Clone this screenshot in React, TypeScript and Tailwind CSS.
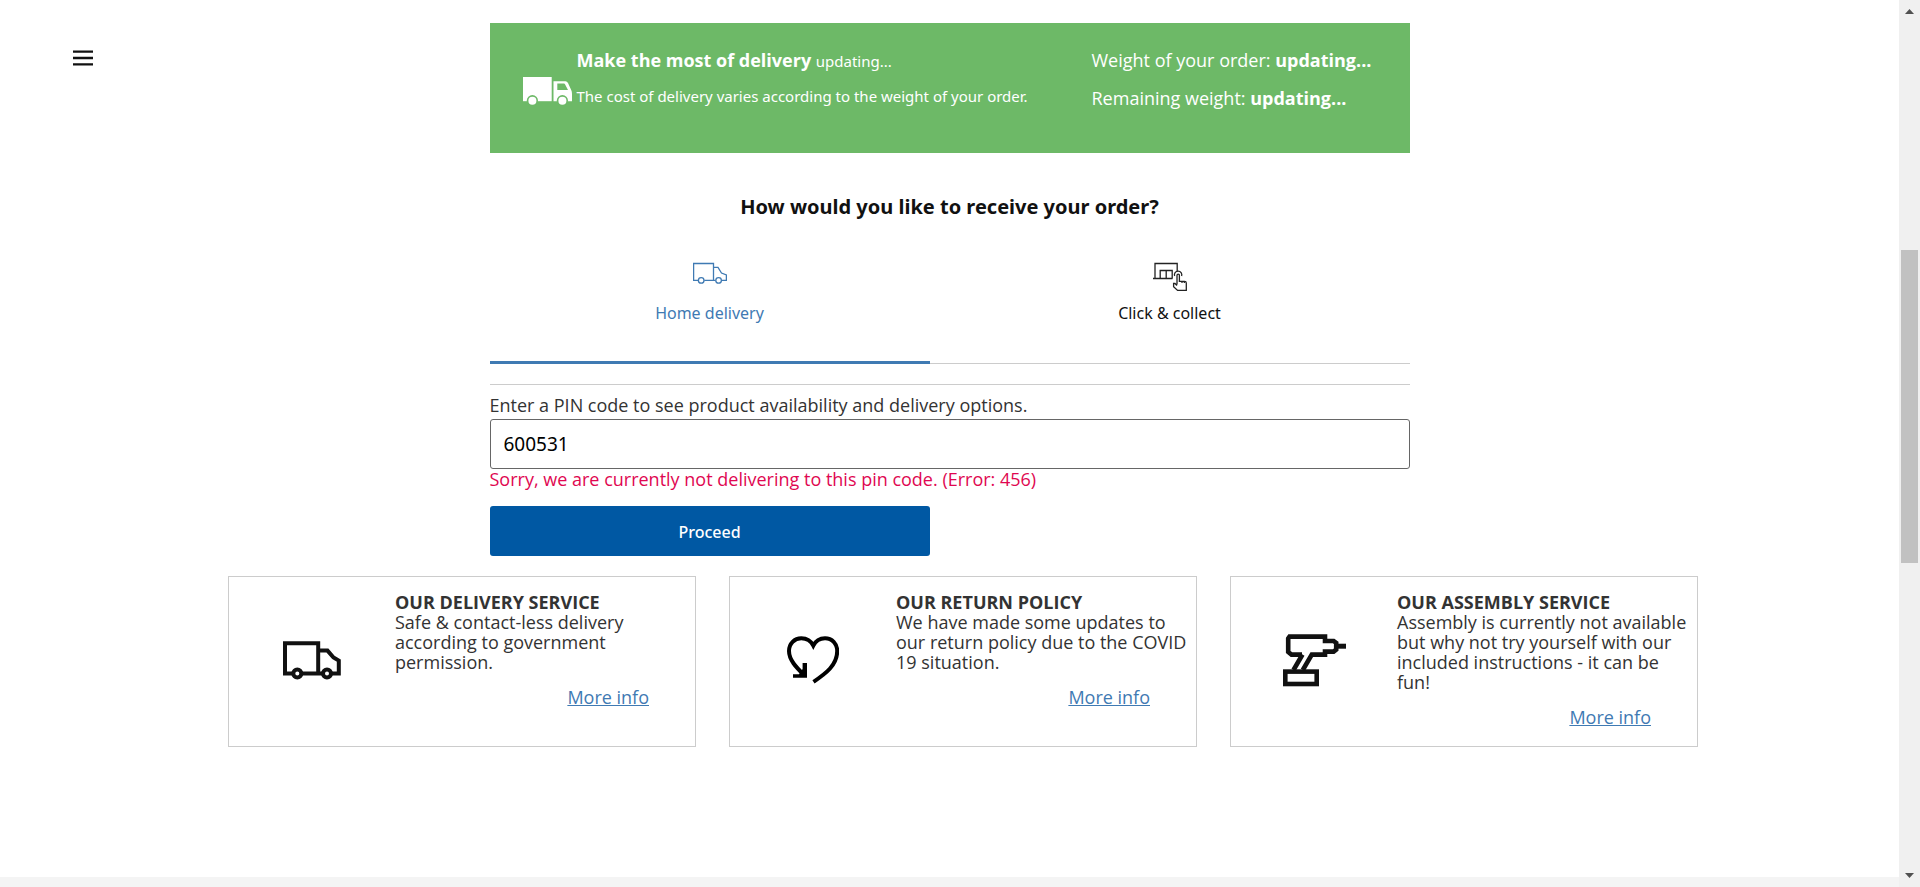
import React, { useState } from "react";

const blue = "#3f7ab3";

function BannerTruck() {
  return (
    <svg width="49" height="29" viewBox="0 0 49 29" aria-hidden="true" className="shrink-0">
      <rect x="0" y="0" width="28.7" height="24.2" fill="#fff" />
      <path
        fill="#fff"
        fillRule="evenodd"
        d="M30.5 4.3H42.5Q44 4.3 45 6L48.2 13Q49 14.5 49 17V24.2H30.5ZM34.3 6.5V13H45L42 7.3Q41.6 6.5 41 6.5Z"
      />
      <circle cx="9.4" cy="23.6" r="5.6" fill="#6db967" />
      <circle cx="39.4" cy="23.6" r="5.6" fill="#6db967" />
      <circle cx="9.4" cy="23.8" r="4" fill="#fff" />
      <circle cx="39.4" cy="23.8" r="4" fill="#fff" />
    </svg>
  );
}

function TabTruck() {
  return (
    <svg width="34" height="30" viewBox="0 0 34 30" fill="none" stroke={blue} strokeWidth="1.3" aria-hidden="true">
      <path d="M5 18.3H.6V1.5H20.5V18.3M11.3 18.3H22.5M20.5 5.3H25L28.5 11L33.4 13V18.3H28.7" />
      <circle cx="8.2" cy="18.4" r="2.8" />
      <circle cx="25.6" cy="18.4" r="2.8" />
    </svg>
  );
}

function StoreHand() {
  return (
    <svg width="34" height="30" viewBox="0 0 34 30" fill="none" stroke="#222" strokeWidth="1.3" aria-hidden="true">
      <path d="M0 16.5H19.5M2 16.5V1.5H24.2V9.5" />
      <path d="M7.2 16.5V8.5H19.2V16.5M13.2 8.5V16.5" />
      <path d="M21.6 14A3.7 3.7 0 1 1 28.6 14" />
      <path d="M24 22.5V13.4A1.2 1.2 0 0 1 26.4 13.4V19.3H31.5Q33.3 19.3 33.3 21V28.4H24.6L20.6 24.6V21.5H22L24 23.5M29 19.3V21M31.3 19.3V21" />
    </svg>
  );
}

function CardTruck() {
  return (
    <svg width="58" height="39" viewBox="0 0 58 39" fill="none" stroke="#111" strokeWidth="4" aria-hidden="true">
      <path d="M10 32.4H2V2.2H35.2V32.4M19 32.4H39.5M35.2 9.6H44.5L50.5 16.5L55.8 19.6V32.4H49" />
      <circle cx="14.3" cy="32.6" r="4" fill="#fff" />
      <circle cx="44" cy="32.6" r="4" fill="#fff" />
    </svg>
  );
}

function HeartArrow() {
  return (
    <svg width="52" height="48" viewBox="0 0 52 48" fill="none" stroke="#000" strokeWidth="4" aria-hidden="true">
      <path d="M16.5 38.5C9.5 31.5 2 24 2 15C2 7.5 7.5 2.2 14.3 2.2C19.5 2.2 23.8 4.6 26.3 9.6C28.8 4.6 33 2.2 38 2.2C45 2.2 50.2 7.5 50.2 15C50.2 29 39 37.5 26.5 45.8" />
      <path d="M6 38.2H12L15.6 33V27H20V41.7H6Z" fill="#000" stroke="none" />
    </svg>
  );
}

function Drill() {
  return (
    <svg width="63" height="53" viewBox="0 0 63 53" fill="none" stroke="#111" strokeWidth="4.6" aria-hidden="true">
      <path d="M19 20.6H8.5L5.2 18V4.4L6.5 2.6H42V7H50.6L53.2 9V15.6L50.6 17.6H42V20.6H28.8L19.8 36M19.5 20.5L10.5 36" />
      <path d="M53 12.2H63" strokeWidth="5" />
      <rect x="2.3" y="37.6" width="31.4" height="12.4" />
    </svg>
  );
}

const services = [
  {
    title: "OUR DELIVERY SERVICE",
    text: "Safe & contact-less delivery according to government permission.",
    icon: <CardTruck />,
  },
  {
    title: "OUR RETURN POLICY",
    text: "We have made some updates to our return policy due to the COVID 19 situation.",
    icon: <HeartArrow />,
  },
  {
    title: "OUR ASSEMBLY SERVICE",
    text: "Assembly is currently not available but why not try yourself with our included instructions - it can be fun!",
    icon: <Drill />,
  },
];

function ScrollRail() {
  return (
    <div aria-hidden="true" className="sticky top-0 flex h-screen w-[21px] shrink-0 flex-col items-center bg-[#f0f0f0] py-[9px]">
      <svg width="9" height="5" viewBox="0 0 9 5" className="shrink-0" fill="#505050">
        <path d="M0 5L4.5 0L9 5Z" />
      </svg>
      <div className="flex w-full grow flex-col items-center">
        <div className="grow-[236]" />
        <div className="w-[17px] grow-[313] bg-[#c1c1c1]" />
        <div className="grow-[310]" />
      </div>
      <svg width="9" height="5" viewBox="0 0 9 5" className="shrink-0" fill="#505050">
        <path d="M0 0L4.5 5L9 0Z" />
      </svg>
    </div>
  );
}

export default function App() {
  const [pin, setPin] = useState("600531");
  return (
    <div className="flex min-h-screen bg-white font-['Open_Sans','Noto_Sans',sans-serif] text-lg text-[#333]">
      <div className="flex min-w-0 grow flex-col">
        <div className="grid grid-cols-[1fr_minmax(0,920px)_1fr] pt-[23px]">
          <nav className="pt-[23px] pl-[69px]">
            <button type="button" aria-label="Menu" className="block p-1">
              <svg width="20" height="16" viewBox="0 0 20 16" fill="#111" aria-hidden="true">
                <path d="M0 .4H20V2.8H0ZM0 6.8H20V9.2H0ZM0 13.2H20V15.6H0Z" />
              </svg>
            </button>
          </nav>

          <main>
            <section className="flex h-[130px] bg-[#6db967] pt-6 pl-[33px] text-white">
              <div className="flex w-[569px] items-start">
                <div className="pt-[30px] pr-[5px]">
                  <BannerTruck />
                </div>
                <div>
                  <p className="leading-[26px]">
                    <strong>Make the most of delivery</strong> <span className="font-['Noto_Sans',sans-serif] text-[15px]">updating...</span>
                  </p>
                  <p className="mt-3 font-['Noto_Sans',sans-serif] text-[15px] leading-5">The cost of delivery varies according to the weight of your order.</p>
                </div>
              </div>
              <div className="leading-[26px]">
                <p>
                  Weight of your order: <strong>updating...</strong>
                </p>
                <p className="mt-3">
                  Remaining weight: <strong>updating...</strong>
                </p>
              </div>
            </section>

            <h1 className="mt-10 text-center font-['Noto_Sans',sans-serif] text-xl leading-7 font-bold text-[#111]">How would you like to receive your order?</h1>

            <div role="tablist" className="mt-[41px] flex h-[102px] items-stretch border-b border-[#ccc] font-['Noto_Sans',sans-serif] text-base leading-6">
              <button
                type="button"
                role="tab"
                aria-selected="true"
                className="-mb-px flex w-[440px] flex-col items-center border-b-3 border-[#3f7ab3] text-[#3f7ab3]"
              >
                <TabTruck />
                <span className="mt-[9px]">Home delivery</span>
              </button>
              <button type="button" role="tab" aria-selected="false" className="flex grow flex-col items-center text-[#111]">
                <StoreHand />
                <span className="mt-[9px]">Click &amp; collect</span>
              </button>
            </div>

            <form className="mt-5 border-t border-[#ccc] pt-[7px]" onSubmit={(e) => e.preventDefault()}>
              <label htmlFor="pin" className="block pb-px leading-[26px]">
                Enter a PIN code to see product availability and delivery options.
              </label>
              <input
                id="pin"
                value={pin}
                onChange={(e) => setPin(e.target.value)}
                className="block h-[50px] w-full rounded-[3px] border border-[#666] px-[13px] font-['Noto_Sans',sans-serif] text-[19px] text-black"
              />
              <p className="leading-5 text-[#e00751]">Sorry, we are currently not delivering to this pin code. (Error: 456)</p>
              <button type="submit" className="mt-[17px] block h-[50px] w-[440px] rounded-[3px] bg-[#0058a3] pt-px font-['Noto_Sans',sans-serif] text-base font-medium text-white">
                Proceed
              </button>
            </form>
          </main>
        </div>

        <section className="mx-auto mt-5 grid w-full max-w-[1497px] grid-cols-3 gap-[33px] pl-[27px]">
          {services.map((s) => (
            <article key={s.title} className="flex h-[171px] border border-[#ccc] pt-[15px] pr-1 leading-5">
              <div className="flex h-[136px] w-[166px] shrink-0 items-center justify-center">{s.icon}</div>
              <div className="flex grow flex-col">
                <h2 className="font-bold">{s.title}</h2>
                <p>{s.text}</p>
                <a href="#more" className="mt-[15px] mr-[42px] self-end text-[#3f7ab3] underline">
                  More info
                </a>
              </div>
            </article>
          ))}
        </section>

        <div className="mt-auto h-[10px] bg-[#f4f4f4]" />
      </div>
      <ScrollRail />
    </div>
  );
}
